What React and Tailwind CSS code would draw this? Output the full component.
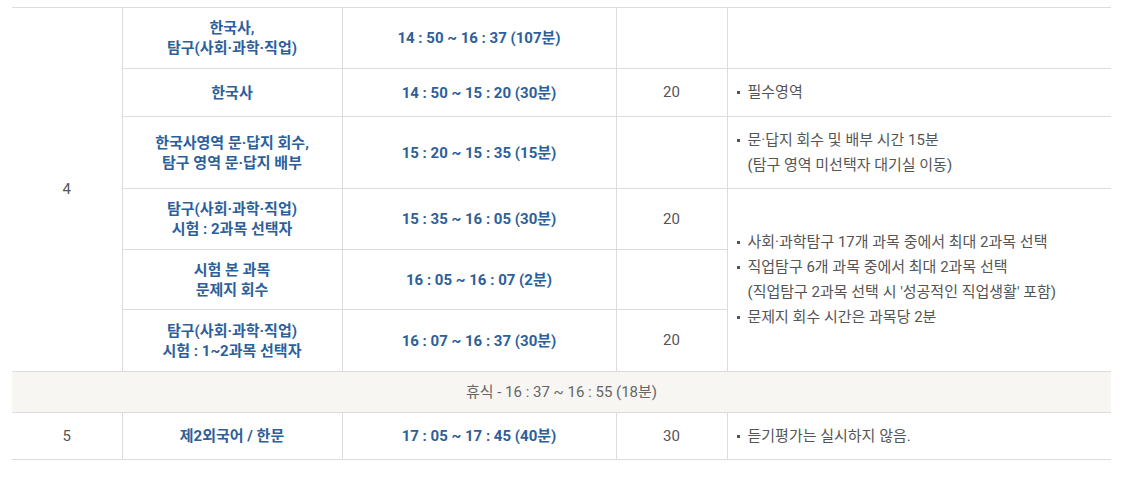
import React from "react";

const font = { fontFamily: 'Roboto, "Noto Sans CJK KR", sans-serif' };

function Note({ lines }) {
  return (
    <div className="text-left">
      {lines.map((l, i) =>
        l.sub ? (
          <div key={i} className="pl-[11px]">{l.text}</div>
        ) : (
          <div key={i} className="flex items-center">
            <span className="w-[3px] h-[3px] bg-[#555] mr-[8px] shrink-0" />
            <span>{l.text}</span>
          </div>
        )
      )}
    </div>
  );
}

const cellL = "border-r border-[#dcdcdc] text-center text-[15px] text-[#555] align-middle";
const cellB = "border-r border-[#dcdcdc] text-center text-[15px] font-bold text-[#2d5f9a] leading-[20px] align-middle";
const cellN = "text-[15px] text-[#555] leading-[25px] pl-[9px] align-middle";

export default function App() {
  return (
    <div className="bg-white w-[1136px] h-[477px] pt-[7px] px-[12px]" style={font}>
      <table className="w-[1099px] border-collapse table-fixed">
        <colgroup>
          <col className="w-[110px]" />
          <col className="w-[220px]" />
          <col className="w-[274px]" />
          <col className="w-[111px]" />
          <col className="w-[384px]" />
        </colgroup>
        <tbody>
          <tr className="h-[61px] border-t border-b border-[#dcdcdc]">
            <td rowSpan={6} className={cellL}>4</td>
            <td className={cellB}>한국사,<br />탐구(사회·과학·직업)</td>
            <td className={cellB}>14 : 50 ~ 16 : 37 (107분)</td>
            <td className={cellL}></td>
            <td className={cellN}></td>
          </tr>
          <tr className="h-[48px] border-b border-[#dcdcdc]">
            <td className={cellB}>한국사</td>
            <td className={cellB}>14 : 50 ~ 15 : 20 (30분)</td>
            <td className={cellL}>20</td>
            <td className={cellN}><Note lines={[{ text: "필수영역" }]} /></td>
          </tr>
          <tr className="h-[72px] border-b border-[#dcdcdc]">
            <td className={cellB}>한국사영역 문·답지 회수,<br />탐구 영역 문·답지 배부</td>
            <td className={cellB}>15 : 20 ~ 15 : 35 (15분)</td>
            <td className={cellL}></td>
            <td className={cellN}>
              <Note lines={[{ text: "문·답지 회수 및 배부 시간 15분" }, { sub: true, text: "(탐구 영역 미선택자 대기실 이동)" }]} />
            </td>
          </tr>
          <tr className="h-[61px] border-b border-[#dcdcdc]">
            <td className={cellB}>탐구(사회·과학·직업)<br />시험 : 2과목 선택자</td>
            <td className={cellB}>15 : 35 ~ 16 : 05 (30분)</td>
            <td className={cellL}>20</td>
            <td rowSpan={3} className={cellN}>
              <Note
                lines={[
                  { text: "사회·과학탐구 17개 과목 중에서 최대 2과목 선택" },
                  { text: "직업탐구 6개 과목 중에서 최대 2과목 선택" },
                  { sub: true, text: "(직업탐구 2과목 선택 시 '성공적인 직업생활' 포함)" },
                  { text: "문제지 회수 시간은 과목당 2분" },
                ]}
              />
            </td>
          </tr>
          <tr className="h-[60px] border-b border-[#dcdcdc]">
            <td className={cellB}>시험 본 과목<br />문제지 회수</td>
            <td className={cellB}>16 : 05 ~ 16 : 07 (2분)</td>
            <td className={cellL}></td>
          </tr>
          <tr className="h-[62px] border-b border-[#dcdcdc]">
            <td className={cellB}>탐구(사회·과학·직업)<br />시험 : 1~2과목 선택자</td>
            <td className={cellB}>16 : 07 ~ 16 : 37 (30분)</td>
            <td className={cellL}>20</td>
          </tr>
          <tr className="h-[41px] border-b border-[#dcdcdc] bg-[#f7f6f2]">
            <td colSpan={5} className="text-center text-[15px] text-[#666] align-middle">
              휴식 - 16 : 37 ~ 16 : 55 (18분)
            </td>
          </tr>
          <tr className="h-[47px] border-b border-[#dcdcdc]">
            <td className={cellL}>5</td>
            <td className={cellB}>제2외국어 / 한문</td>
            <td className={cellB}>17 : 05 ~ 17 : 45 (40분)</td>
            <td className={cellL}>30</td>
            <td className={cellN}><Note lines={[{ text: "듣기평가는 실시하지 않음." }]} /></td>
          </tr>
        </tbody>
      </table>
    </div>
  );
}
